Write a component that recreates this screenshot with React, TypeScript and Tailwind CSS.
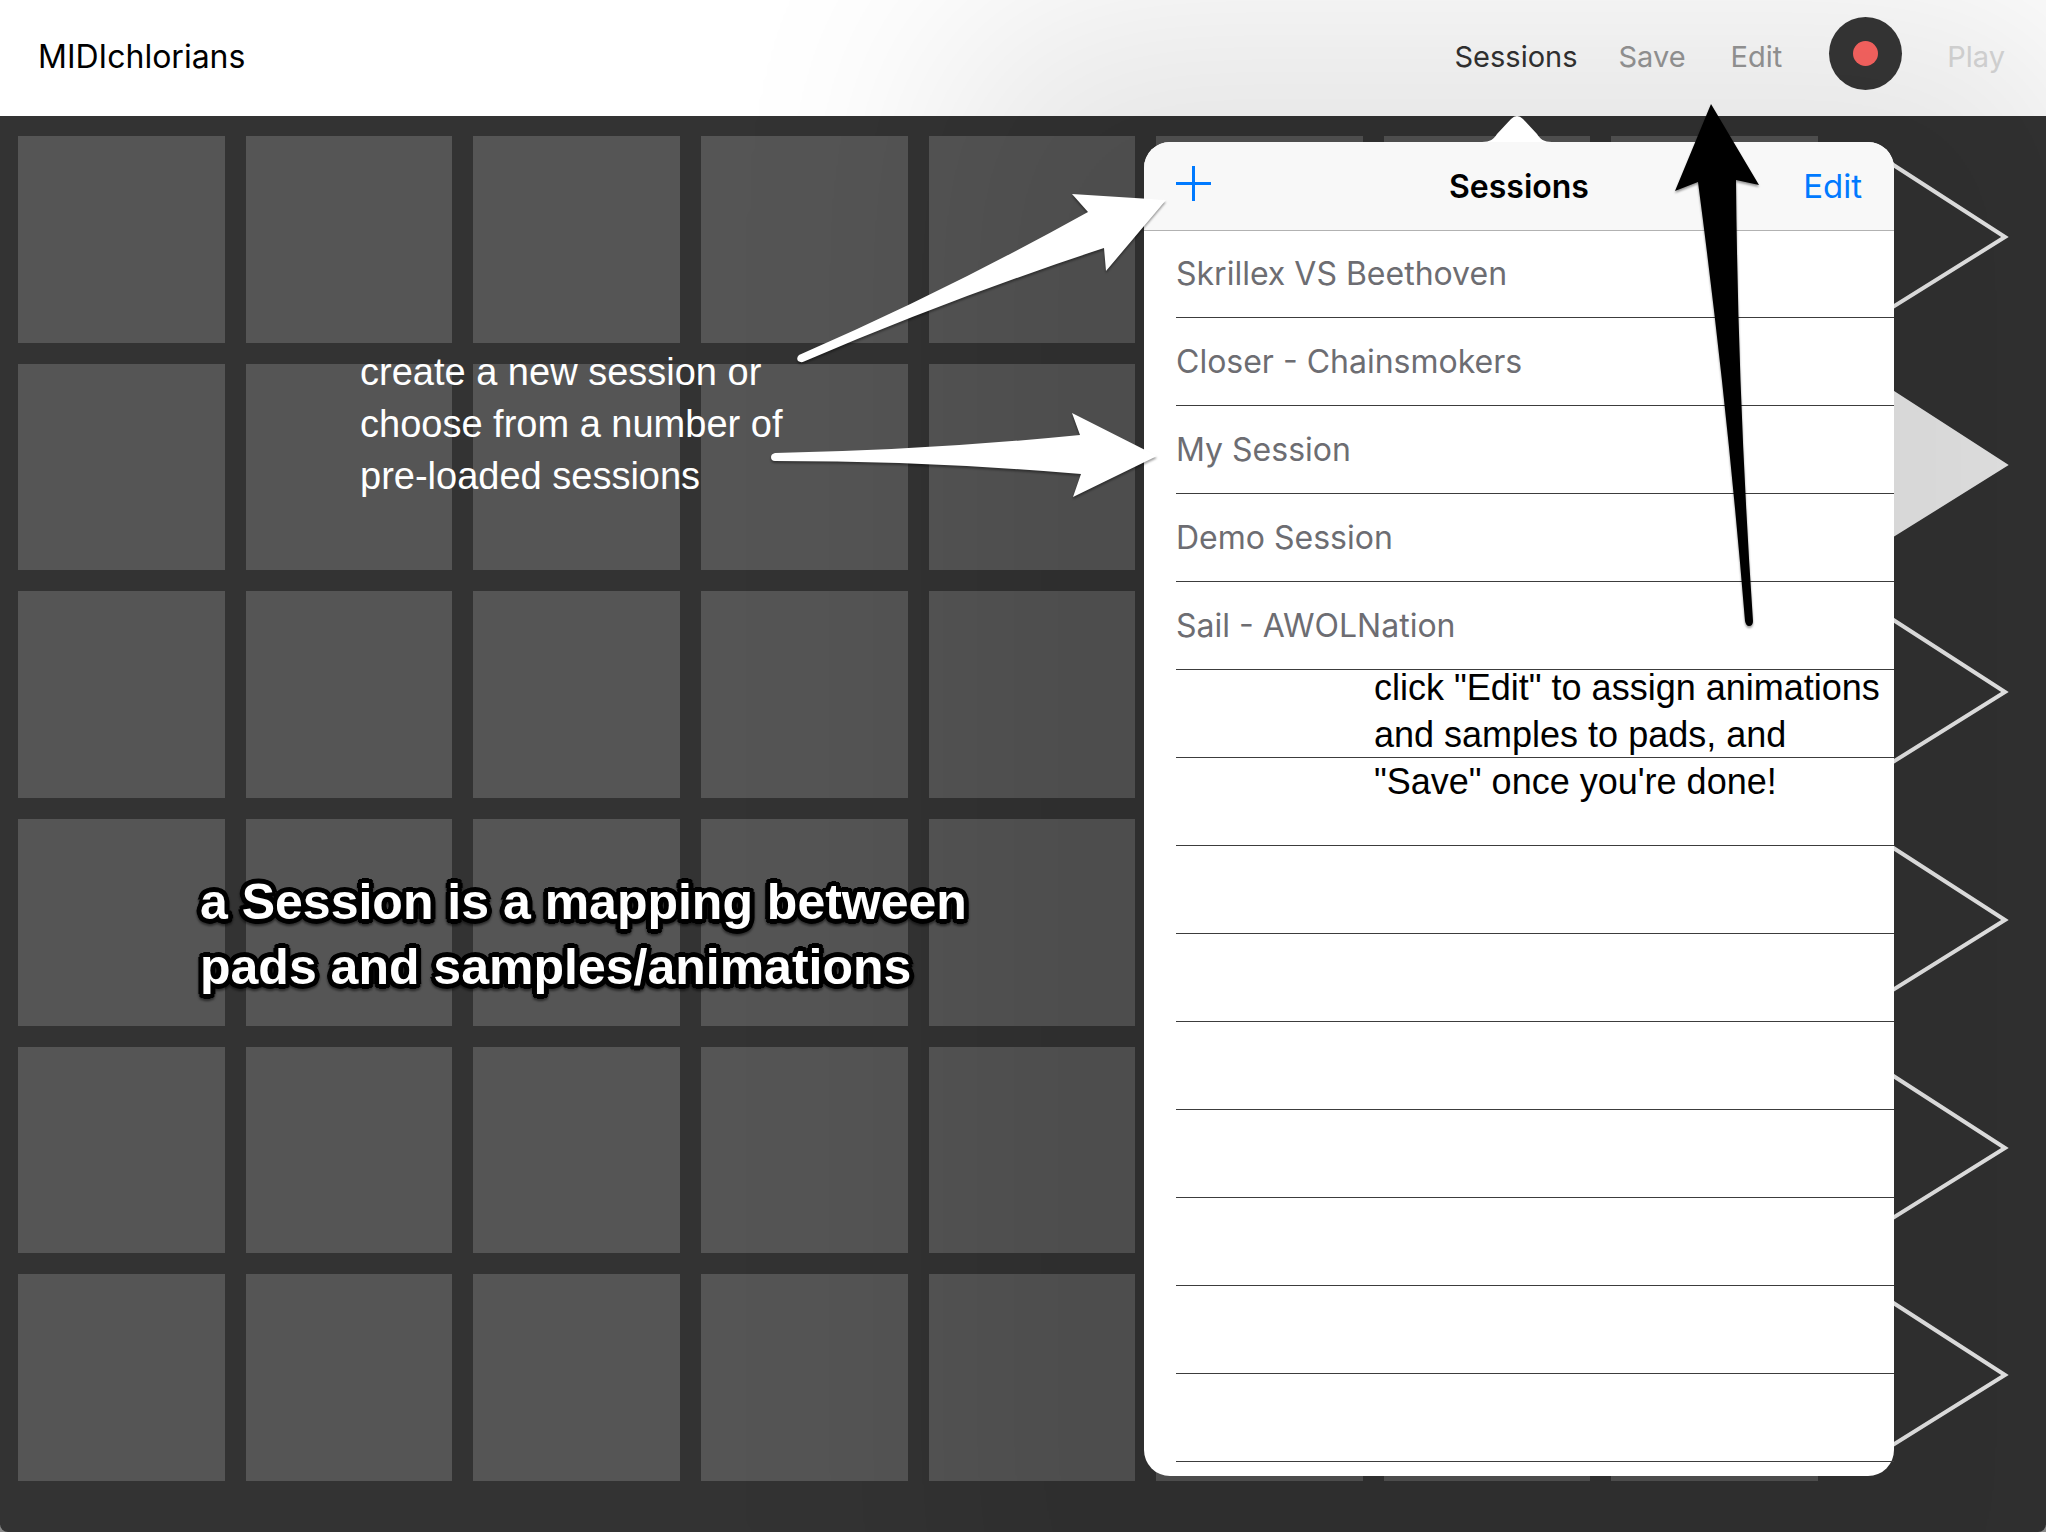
import type { ReactNode } from "react";

const SESSIONS = [
  "Skrillex VS Beethoven",
  "Closer - Chainsmokers",
  "My Session",
  "Demo Session",
  "Sail - AWOLNation",
];
const LIST_ROWS = 14;
const PAD_ROWS = 6;
const PAD_COLUMNS = 8;
const ACTIVE_ROW = 1;

function TopBar() {
  return (
    <header className="flex h-[116px] items-center justify-between bg-white pr-[41px] pb-0.5 pl-[38px]">
      <h1 className="text-[32px] leading-[40px] text-black">MIDIchlorians</h1>
      <nav aria-label="Session controls" className="flex items-center text-[29px] leading-[36px]">
        <button type="button" className="mr-[41px] text-[#333333]">Sessions</button>
        <button type="button" className="mr-[45px] text-[#999999]">Save</button>
        <button type="button" className="mr-[47px] text-[#999999]">Edit</button>
        <button
          type="button"
          aria-label="Record"
          className="mr-[45px] mb-2 flex size-[73px] items-center justify-center rounded-full bg-[#373737]"
        >
          <span className="size-[25px] rounded-full bg-[#ff6663]" />
        </button>
        <button type="button" className="text-[#dadada]">Play</button>
      </nav>
    </header>
  );
}

function PadGrid() {
  const pads = Array.from({ length: PAD_ROWS * PAD_COLUMNS }, (_, i) => i);
  return (
    <div className="grid flex-1 grid-cols-8 gap-[21px]">
      {pads.map((i) => (
        <button key={i} type="button" aria-label={`Pad ${i + 1}`} className="aspect-square bg-[#555555]" />
      ))}
    </div>
  );
}

function PageSelectors() {
  const rows = Array.from({ length: PAD_ROWS }, (_, i) => i);
  return (
    <div className="grid w-[171px] grid-rows-6 gap-[21px]">
      {rows.map((i) => (
        <button key={i} type="button" aria-label={`Page ${i + 1}`} className="flex items-start">
          <svg viewBox="0 0 171 204" className="w-full" aria-hidden="true">
            <path
              d="M26 10 L167 101 L26 189 Z"
              fill={i === ACTIVE_ROW ? "#efefef" : "none"}
              stroke="#efefef"
              strokeWidth="4"
            />
          </svg>
        </button>
      ))}
    </div>
  );
}

function Arrow({ d, viewBox, className }: { d: string; viewBox: string; className: string }) {
  return (
    <svg viewBox={viewBox} className={className} aria-hidden="true">
      <path d={d} fill="currentColor" />
    </svg>
  );
}

function Note({ className, children }: { className: string; children: ReactNode }) {
  return (
    <p className={`pointer-events-none absolute z-10 font-['Liberation_Sans',Arial,sans-serif] whitespace-nowrap ${className}`}>
      {children}
    </p>
  );
}

function SessionsPopover() {
  const rows = Array.from({ length: LIST_ROWS }, (_, i) => SESSIONS[i]);
  return (
    <div className="absolute top-[142px] right-[152px] w-[750px]">
      <section
        aria-label="Sessions"
        className="rounded-[26px] bg-white pb-[14px] shadow-[0_60px_230px_200px_rgba(0,0,0,0.1)]"
      >
        <div className="relative grid h-[88px] grid-cols-3 items-center rounded-t-[26px] bg-[#f8f8f8] px-8 text-[33px] leading-[40px] shadow-[0_1px_0_#b2b2b2]">
          <button type="button" aria-label="New session" className="mb-1 justify-self-start text-[#007aff]">
            <svg viewBox="0 0 36 36" className="size-9" aria-hidden="true">
              <path d="M0 17.5H35M17.5 0V35" stroke="currentColor" strokeWidth="3" />
            </svg>
          </button>
          <h2 className="justify-self-center pt-0.5 text-[32px] font-semibold text-black">Sessions</h2>
          <button type="button" className="justify-self-end text-[#007aff]">Edit</button>
        </div>
        <ul className="text-[32px] leading-[40px] text-[#6d6d72]">
          {rows.map((name, i) => (
            <li key={i} className="ml-8 h-[88px] border-b border-[#3c3c3c]">
              {name && (
                <button type="button" className="flex h-full w-full items-center text-left">
                  {name}
                </button>
              )}
            </li>
          ))}
        </ul>
      </section>

      <svg viewBox="0 0 70 26" className="absolute -top-[26px] left-[338px] w-[70px] text-white" aria-hidden="true">
        <path
          d="M0 26C8 26 12 23 15 18L29 3Q35 -3 41 3L55 18C58 23 62 26 70 26Z"
          fill="currentColor"
        />
      </svg>

      <Note className="top-[204px] -left-[784px] text-[38px] leading-[52px] text-white">
        create a new session or
        <br />
        choose from a number of
        <br />
        pre-loaded sessions
      </Note>
      <Note className="top-[522px] left-[230px] text-[36px] leading-[47px] text-black">
        click &quot;Edit&quot; to assign animations
        <br />
        and samples to pads, and
        <br />
        &quot;Save&quot; once you&apos;re done!
      </Note>

      <Arrow
        viewBox="764 182 420 330"
        className="pointer-events-none absolute top-[40px] -left-[380px] w-[420px] text-white drop-shadow-[0_2px_1px_rgba(0,0,0,0.4)]"
        d="M1166 200L1072 194L1088 212Q946 291 799 355Q796 358 798 361Q801 363 804 361.500Q952 298 1104 248L1106 271ZM1157 456L1072 413L1080 435Q930 450 775 453Q771 454 771 457Q771 461 775 461Q930 461 1081 474L1073 497Z"
      />
      <Arrow
        viewBox="1670 100 100 532"
        className="pointer-events-none absolute -top-[42px] left-[526px] w-[100px] text-black drop-shadow-[0_2px_1px_rgba(0,0,0,0.4)]"
        d="M1711 104L1675 191L1698 182Q1727 402 1745 621Q1746 626 1749 626Q1753 626 1753 621Q1738 400 1736 180L1759 185Z"
      />
    </div>
  );
}

export default function App() {
  return (
    <div className="min-h-screen bg-[#8a8a8a] font-['Inter',sans-serif]">
      <div className="relative min-h-screen overflow-hidden rounded-b-lg bg-[#333333]">
        <TopBar />
        <main className="relative flex gap-5 pt-5 pr-[37px] pb-[51px] pl-[18px]">
          <PadGrid />
          <PageSelectors />
          <Note className="top-[754px] left-[200px] text-[50px] leading-[65px] font-bold text-white drop-shadow-[0_2px_1px_rgba(0,0,0,0.5)] [text-shadow:5px_0_#000,4px_3px_#000,3px_4px_#000,0_5px_#000,-3px_4px_#000,-4px_3px_#000,-5px_0_#000,-4px_-3px_#000,-3px_-4px_#000,0_-5px_#000,3px_-4px_#000,4px_-3px_#000,2px_2px_#000,-2px_-2px_#000,2px_-2px_#000,-2px_2px_#000]">
            a Session is a mapping between
            <br />
            pads and samples/animations
          </Note>
        </main>
        <SessionsPopover />
      </div>
    </div>
  );
}
